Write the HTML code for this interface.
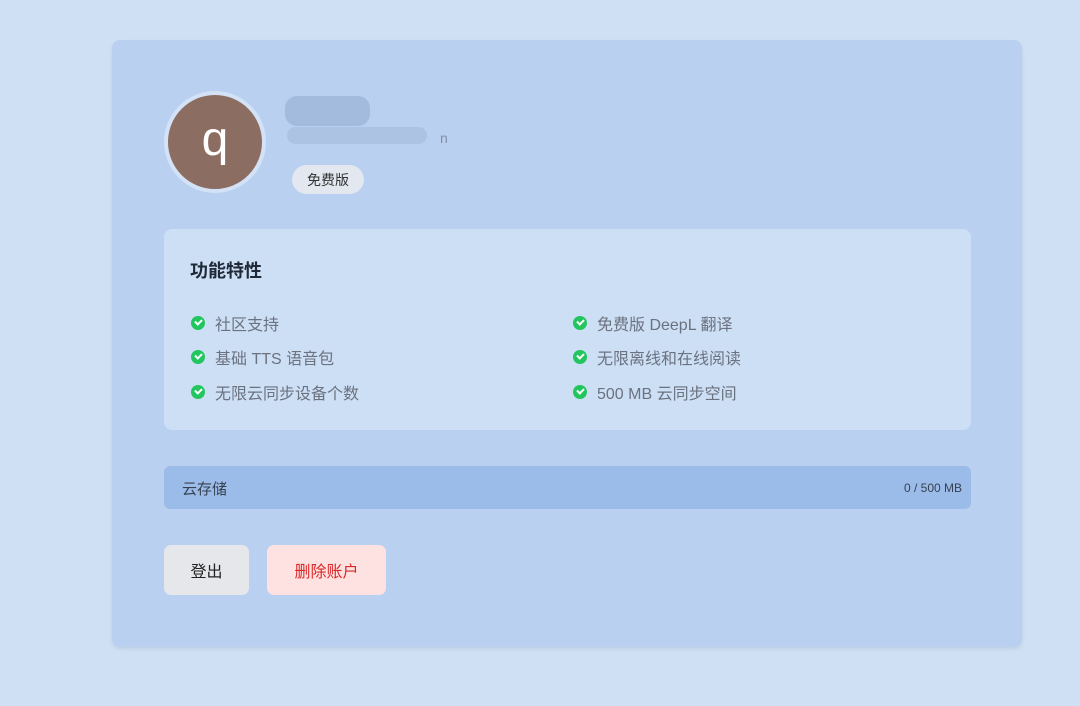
<!DOCTYPE html>
<html><head><meta charset="utf-8"><style>
*{margin:0;padding:0;box-sizing:border-box}
body{width:1080px;height:706px;background:#cfe0f5;font-family:"Liberation Sans","Noto Sans CJK SC",sans-serif;position:relative;overflow:hidden}
.card{position:absolute;left:112px;top:40px;width:910px;height:607px;background:#bad0f0;border-radius:8px;box-shadow:0 2px 4px rgba(0,0,0,.08)}
.av{position:absolute;left:164px;top:91px;width:102px;height:102px;border-radius:50%;background:#8c6d62;border:4px solid #d3e2f6;color:#fff;font-size:48px;text-align:center;line-height:90px}
.blob{position:absolute;background:#a3bbdc;border-radius:12px}
.tag{position:absolute;left:292px;top:165px;width:72px;height:29px;border-radius:15px;background:#e3e8f0;font-size:14px;color:#333;text-align:center;line-height:30px}
.feat{position:absolute;left:164px;top:229px;width:807px;height:201px;background:#cddff5;border-radius:8px}
.feat h3{position:absolute;left:26px;top:28px;font-size:18px;color:#1f2937;font-weight:bold}
.it{position:absolute;font-size:16px;color:#6b7280;display:flex;align-items:center}
.it i{width:14px;height:14px;border-radius:50%;background:#22c55e;margin-right:10px;position:relative}
.it i:after{content:"";position:absolute;left:4px;top:3px;width:5px;height:3px;border-left:2px solid #fff;border-bottom:2px solid #fff;transform:rotate(-45deg)}
.bar{position:absolute;left:164px;top:466px;width:807px;height:43px;background:#9bbce9;border-radius:6px;font-size:15px;color:#374151}
.btn{position:absolute;top:545px;height:50px;border-radius:7px;font-size:16px;text-align:center;line-height:56px}
</style></head><body>
<div class="card"></div>
<div class="av">q</div>
<div class="blob" style="left:285px;top:96px;width:85px;height:30px"></div>
<div class="blob" style="left:287px;top:127px;width:140px;height:17px;background:#acc3e3"></div>
<div style="position:absolute;left:440px;top:130px;font-size:14px;color:#8090a8">n</div>
<div class="tag">免费版</div>
<div class="feat"><h3>功能特性</h3>
<div class="it" style="left:27px;top:82px"><i></i>社区支持</div>
<div class="it" style="left:27px;top:116px"><i></i>基础 TTS 语音包</div>
<div class="it" style="left:27px;top:151px"><i></i>无限云同步设备个数</div>
<div class="it" style="left:409px;top:82px"><i></i>免费版 DeepL 翻译</div>
<div class="it" style="left:409px;top:116px"><i></i>无限离线和在线阅读</div>
<div class="it" style="left:409px;top:151px"><i></i>500 MB 云同步空间</div>
</div>
<div class="bar"><span style="position:absolute;left:18px;top:12px">云存储</span><span style="position:absolute;right:9px;top:15px;font-size:12px">0 / 500 MB</span></div>
<div class="btn" style="left:164px;width:85px;background:#e5e7eb;color:#222">登出</div>
<div class="btn" style="left:267px;width:119px;background:#fee2e2;color:#dc2626">删除账户</div>
</body></html>
